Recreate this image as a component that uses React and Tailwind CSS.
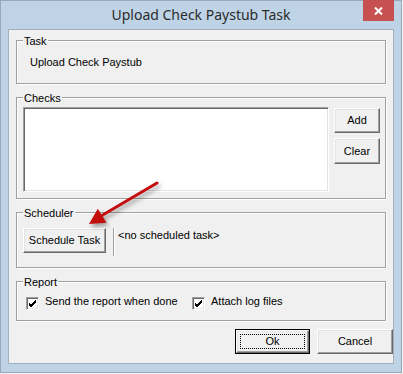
import React from 'react'

const raised = 'border border-t-white border-l-white border-r-[#696969] border-b-[#696969] shadow-[inset_-1px_-1px_0_#a0a0a0,inset_1px_1px_0_#e3e3e3]'
const sunken = 'border border-t-[#a0a0a0] border-l-[#a0a0a0] border-r-white border-b-white shadow-[inset_1px_1px_0_#696969,inset_-1px_-1px_0_#e3e3e3]'

function Group({ label, className = '', children }) {
  return (
    <div className={`relative border border-[#a0a0a0] shadow-[inset_1px_1px_0_#fff,1px_1px_0_#fff] ${className}`}>
      <span className="absolute top-[-6px] left-[6px] bg-[#f0f0f0] pl-px pr-px leading-[13px]">{label}</span>
      {children}
    </div>
  )
}

function Btn({ children, className = '' }) {
  return (
    <button type="button" className={`flex items-center justify-center bg-[#f0f0f0] leading-[13px] ${raised} ${className}`}>
      {children}
    </button>
  )
}

function Check({ label }) {
  return (
    <label className="flex items-start gap-[6px]">
      <span className={`flex h-[13px] w-[13px] items-center justify-center bg-white ${sunken}`}>
        <svg width="7" height="7" viewBox="0 0 7 7">
          <path d="M0 2 L2 4 L7 -1 M0 3 L2 5 L7 0 M0 4 L2 6 L7 1" stroke="#000" strokeWidth="1" fill="none" transform="translate(0 1)" />
        </svg>
      </span>
      <span className="-mt-[2px] leading-[13px]">{label}</span>
    </label>
  )
}

export default function App() {
  return (
    <div className="relative h-[374px] w-[403px] bg-[#f3f3f3] text-[11px] text-black" style={{ fontFamily: '"Liberation Sans", Arial, sans-serif' }}>
      <div className="flex h-[373px] w-[402px] flex-col border border-[#9aa9b8] bg-[#bfd3e6] px-[7px] pb-[8px]">
        <div className="relative flex h-[28px] shrink-0 items-start justify-center pt-[4px]">
          <span className="text-[14px] leading-[20px] text-[#2b2b2b]" style={{ fontFamily: '"Noto Sans", sans-serif' }}>
            Upload Check Paystub Task
          </span>
          <div className="absolute right-0 top-[-1px] flex h-[21px] w-[31px] items-center justify-center bg-[#c75050]">
            <svg width="9" height="8" viewBox="0 0 9 8">
              <path d="M1 0.5 L8 7.5 M8 0.5 L1 7.5" stroke="#fff" strokeWidth="2" />
            </svg>
          </div>
        </div>

        <div className="flex h-[335px] flex-col border border-[#a3b1bf] bg-[#f0f0f0] pl-[7px] pt-[10px]">
          <Group label="Task" className="h-[44px] w-[370px] pl-[13px] pt-[15px]">
            <div className="leading-[13px]">Upload Check Paystub</div>
          </Group>

          <Group label="Checks" className="mt-[13px] flex h-[102px] w-[370px] gap-[5px] pl-[6px] pt-[9px]">
            <div className={`h-[85px] w-[306px] bg-white ${sunken}`} />
            <div className="flex flex-col gap-[5px] pt-px">
              <Btn className="h-[25px] w-[46px]">Add</Btn>
              <Btn className="h-[26px] w-[46px]">Clear</Btn>
            </div>
          </Group>

          <Group label="Scheduler" className="mt-[13px] flex h-[56px] w-[370px] items-start pl-[6px] pt-[15px]">
            <Btn className="h-[25px] w-[83px]">Schedule Task</Btn>
            <div className="ml-[7px] h-[28px] w-[2px] border-l border-l-[#a0a0a0] border-r border-r-white" />
            <div className="ml-[3px] mt-px leading-[13px]">&lt;no scheduled task&gt;</div>
          </Group>

          <Group label="Report" className="mt-[13px] flex h-[40px] w-[370px] items-start pl-[9px] pt-[15px]">
            <div className="w-[166px]">
              <Check label="Send the report when done" />
            </div>
            <Check label="Attach log files" />
          </Group>

          <div className="mt-[8px] flex w-[377px] justify-end gap-[7px]">
            <div className="h-[25px] w-[75px] border border-black">
              <Btn className="relative h-full w-full">
                <span className="absolute inset-[3px] border border-dotted border-black" />
                Ok
              </Btn>
            </div>
            <Btn className="h-[25px] w-[76px]">Cancel</Btn>
          </div>
        </div>
      </div>

      <svg className="pointer-events-none absolute left-0 top-0 drop-shadow-[2px_3px_2px_rgba(0,0,0,0.35)]" width="403" height="374" viewBox="0 0 403 374">
        <line x1="157" y1="183" x2="101" y2="216" stroke="#c40d0d" strokeWidth="3" strokeLinecap="round" />
        <polygon points="89,224 97.8,208.8 106.6,222.8" fill="#c40d0d" />
      </svg>
    </div>
  )
}
